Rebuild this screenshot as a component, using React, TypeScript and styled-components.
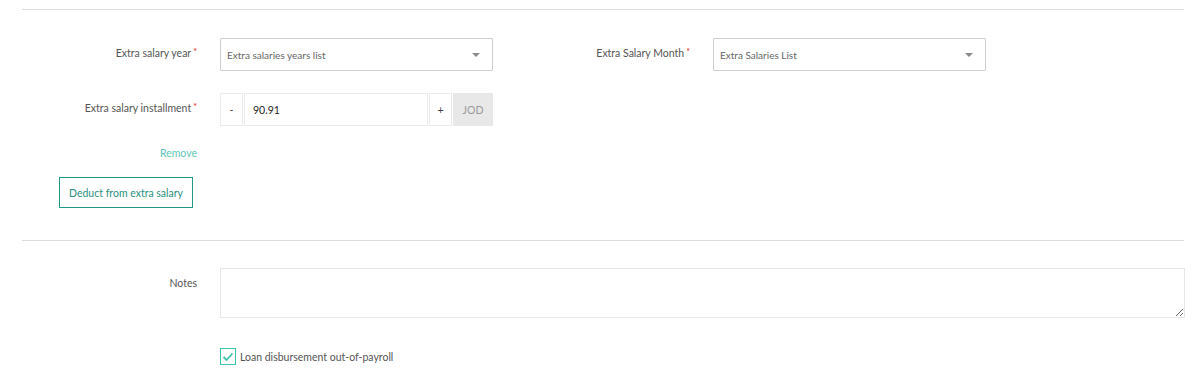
import styled, { createGlobalStyle } from "styled-components";

const GlobalStyle = createGlobalStyle`
  html, body {
    margin: 0;
    padding: 0;
    background: #fff;
    font-family: "Lato", "Open Sans", sans-serif;
  }
  * { box-sizing: border-box; }
`;

const Caret = () => (
  <svg width="8" height="4" viewBox="0 0 8 4">
    <path d="M0 0 L8 0 L4 4 Z" fill="#8a8a8a" />
  </svg>
);

const Check = () => (
  <svg width="12" height="10" viewBox="0 0 12 10">
    <path d="M1.5 5 L4.5 8 L10.5 1.5" fill="none" stroke="#3ec2ab" strokeWidth="1.8" />
  </svg>
);

export default function App() {
  return (
    <>
      <GlobalStyle />
      <SPage>
        <SDivider />
        <SSection>
          <SRow>
            <SField>
              <SLabel>
                Extra salary year<SReq>*</SReq>
              </SLabel>
              <SSelect>
                <span>Extra salaries years list</span>
                <Caret />
              </SSelect>
            </SField>
            <SField>
              <SLabel>
                Extra Salary Month<SReq>*</SReq>
              </SLabel>
              <SSelect>
                <span>Extra Salaries List</span>
                <Caret />
              </SSelect>
            </SField>
          </SRow>
          <SRow>
            <SField>
              <SLabel>
                Extra salary installment<SReq>*</SReq>
              </SLabel>
              <SInputGroup>
                <SStep>-</SStep>
                <SNumber>90.91</SNumber>
                <SStep>+</SStep>
                <SAddon>JOD</SAddon>
              </SInputGroup>
            </SField>
          </SRow>
          <SLinkRow>
            <SRemove>Remove</SRemove>
          </SLinkRow>
          <SOutlineButton>Deduct from extra salary</SOutlineButton>
        </SSection>
        <SDivider />
        <SNotesRow>
          <SNotesLabel>Notes</SNotesLabel>
          <STextArea />
        </SNotesRow>
        <SCheckRow>
          <SCheckBox>
            <Check />
          </SCheckBox>
          <SCheckLabel>Loan disbursement out-of-payroll</SCheckLabel>
        </SCheckRow>
      </SPage>
    </>
  );
}

const SPage = styled.div`
  width: 1203px;
  height: 380px;
  padding: 9px 19px 0 22px;
  overflow: hidden;
`;

const SDivider = styled.div`
  height: 1px;
  background: #dcdcdc;
  width: 1162px;
`;

const SSection = styled.div`
  padding-top: 28px;
  height: 230px;
`;

const SRow = styled.div`
  display: flex;
  gap: 22px;
  margin-bottom: 22px;
`;

const SField = styled.div`
  display: grid;
  grid-template-columns: 175px 273px;
  column-gap: 23px;
  align-items: start;
`;

const SLabel = styled.div`
  text-align: right;
  font-size: 10.5px;
  color: #555;
  padding-top: 9px;
  white-space: nowrap;
`;

const SReq = styled.span`
  color: #e02020;
  margin-left: 2px;
  font-size: 9px;
  vertical-align: top;
  position: relative;
  top: -1px;
`;

const SSelect = styled.div`
  height: 33px;
  border: 1px solid #cfcfcf;
  border-radius: 1px;
  display: flex;
  align-items: center;
  justify-content: space-between;
  padding: 0 12px 0 6px;
  font-size: 10px;
  color: #666;
`;

const SInputGroup = styled.div`
  display: flex;
  height: 33px;
`;

const SStep = styled.div`
  width: 23px;
  border: 1px solid #ebebeb;
  display: flex;
  align-items: center;
  justify-content: center;
  font-size: 10.5px;
  color: #444;
  margin-right: 1px;
`;

const SNumber = styled.div`
  flex: 1;
  border: 1px solid #ebebeb;
  display: flex;
  align-items: center;
  padding-left: 8px;
  font-size: 10.5px;
  color: #222;
  margin-right: 1px;
`;

const SAddon = styled.div`
  width: 40px;
  background: #e8e8e8;
  display: flex;
  align-items: center;
  justify-content: center;
  font-size: 10.5px;
  color: #999;
`;

const SLinkRow = styled.div`
  width: 175px;
  text-align: right;
  margin-top: -4px;
  line-height: 14px;
`;

const SRemove = styled.a`
  font-size: 10.5px;
  color: #5cc9b6;
  cursor: pointer;
`;

const SOutlineButton = styled.button`
  display: block;
  margin: 17px 0 0 37px;
  height: 31px;
  width: 134px;
  padding: 0;
  background: #fff;
  border: 1px solid #1f9886;
  border-radius: 0;
  font-family: inherit;
  font-size: 10.5px;
  color: #2a8f80;
`;

const SNotesRow = styled.div`
  display: grid;
  grid-template-columns: 175px 965px;
  column-gap: 23px;
  padding-top: 27px;
`;

const SNotesLabel = styled.div`
  text-align: right;
  font-size: 10.5px;
  color: #555;
  padding-top: 9px;
`;

const STextArea = styled.textarea`
  height: 50px;
  border: 1px solid #e6e6e6;
  border-radius: 0;
  resize: both;
  outline: none;
  font-family: inherit;
`;

const SCheckRow = styled.div`
  display: flex;
  align-items: center;
  gap: 4px;
  margin: 30px 0 0 198px;
`;

const SCheckBox = styled.span`
  width: 16px;
  height: 17px;
  border: 1px solid #3ec2ab;
  display: flex;
  align-items: center;
  justify-content: center;
`;

const SCheckLabel = styled.span`
  font-size: 10.5px;
  color: #555;
`;
